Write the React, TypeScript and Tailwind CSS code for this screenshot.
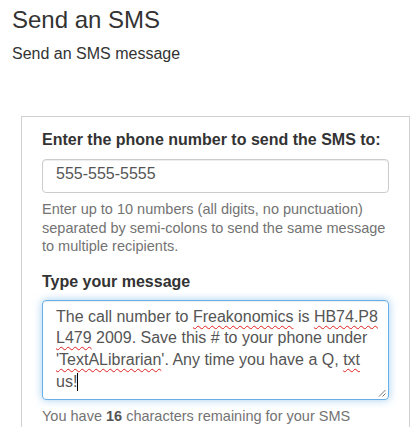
import type { ReactNode } from "react";

function Miss({ children }: { children: ReactNode }) {
  return (
    <span className="underline decoration-wavy decoration-[#e02020] decoration-1 underline-offset-[3px]">
      {children}
    </span>
  );
}

export default function App() {
  return (
    <div className="min-h-screen bg-white px-[12px] font-['Liberation_Sans',Arial,sans-serif] text-[#333]">
      <h1 className="mt-[7px] text-[24px] leading-[26px] font-normal">Send an SMS</h1>
      <p className="mt-[11px] text-[16px] leading-[20px]">Send an SMS message</p>

      <div className="mt-[52px] ml-[9px] w-[389px] border border-[#d0d0d0] bg-white px-[20px] pt-[13px] pb-[30px]">
        <label className="block text-[16px] leading-[20px] font-bold mb-[9px]">
          Enter the phone number to send the SMS to:
        </label>
        <div className="h-[34px] rounded-[4px] border border-[#cccccc] px-[13px] pt-[4px] text-[16px] leading-[20px] text-[#555] shadow-[inset_0_1px_1px_rgba(0,0,0,0.075)]">
          555-555-5555
        </div>
        <p className="mt-[7px] text-[14.5px] leading-[18.5px] text-[#737373]">
          Enter up to 10 numbers (all digits, no punctuation) separated by semi-colons to send the same message
          to multiple recipients.
        </p>

        <label className="mt-[16px] block text-[16px] leading-[20px] font-bold mb-[8px]">Type your message</label>
        <div className="relative h-[100px] rounded-[4px] border border-[#66afe9] px-[13px] pt-[5px] text-[16px] leading-[21.7px] text-[#555] whitespace-nowrap shadow-[inset_0_1px_1px_rgba(0,0,0,0.075),0_0_8px_rgba(102,175,233,0.6)]">
          The call number to <Miss>Freakonomics</Miss> is <Miss>HB74.P8</Miss>
          <br />
          <Miss>L479</Miss> 2009. Save this # to your phone under
          <br />
          <Miss>'TextALibrarian</Miss>'. Any time you have a Q, <Miss>txt</Miss>
          <br />
          us!
          <span className="inline-block w-px h-[18px] bg-black align-[-4px]" />
          <svg className="absolute right-[2px] bottom-[2px]" width="8" height="8" viewBox="0 0 8 8">
            <line x1="7.5" y1="1" x2="1" y2="7.5" stroke="#777" strokeWidth="1" />
            <line x1="7.5" y1="4.5" x2="4.5" y2="7.5" stroke="#777" strokeWidth="1" />
          </svg>
        </div>
        <p className="mt-[7px] text-[14.5px] leading-[18.5px] text-[#737373]">
          You have <b className="text-[#555]">16</b> characters remaining for your SMS message.
        </p>
      </div>
    </div>
  );
}
